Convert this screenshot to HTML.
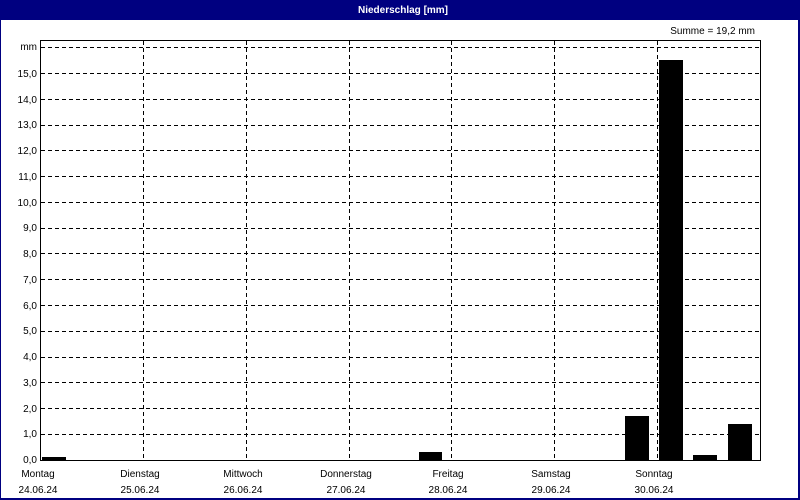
<!DOCTYPE html>
<html><head><style>
body{margin:0;background:#fff}
svg{display:block}
text{font-family:"Liberation Sans",sans-serif;font-size:10px;fill:#000}
</style></head><body>
<svg width="800" height="500" xmlns="http://www.w3.org/2000/svg">
<rect x="0" y="0" width="800" height="500" fill="#000080"/>
<rect x="1" y="20" width="797" height="478" fill="#fff"/>
<text x="403" y="13" text-anchor="middle" style="fill:#fff;font-weight:bold">Niederschlag [mm]</text>
<text x="755" y="34" text-anchor="end">Summe = 19,2 mm</text>
<g stroke="#000" stroke-width="1" stroke-dasharray="4,3" shape-rendering="crispEdges">
<line x1="41" y1="47.5" x2="760" y2="47.5"/>
<line x1="41" y1="73.5" x2="760" y2="73.5"/>
<line x1="41" y1="99.5" x2="760" y2="99.5"/>
<line x1="41" y1="125.5" x2="760" y2="125.5"/>
<line x1="41" y1="150.5" x2="760" y2="150.5"/>
<line x1="41" y1="176.5" x2="760" y2="176.5"/>
<line x1="41" y1="202.5" x2="760" y2="202.5"/>
<line x1="41" y1="228.5" x2="760" y2="228.5"/>
<line x1="41" y1="253.5" x2="760" y2="253.5"/>
<line x1="41" y1="279.5" x2="760" y2="279.5"/>
<line x1="41" y1="305.5" x2="760" y2="305.5"/>
<line x1="41" y1="331.5" x2="760" y2="331.5"/>
<line x1="41" y1="357.5" x2="760" y2="357.5"/>
<line x1="41" y1="382.5" x2="760" y2="382.5"/>
<line x1="41" y1="408.5" x2="760" y2="408.5"/>
<line x1="41" y1="434.5" x2="760" y2="434.5"/>
<line x1="143.5" y1="41" x2="143.5" y2="460"/>
<line x1="246.5" y1="41" x2="246.5" y2="460"/>
<line x1="349.5" y1="41" x2="349.5" y2="460"/>
<line x1="451.5" y1="41" x2="451.5" y2="460"/>
<line x1="554.5" y1="41" x2="554.5" y2="460"/>
<line x1="657.5" y1="41" x2="657.5" y2="460"/>
</g>
<g fill="#000" shape-rendering="crispEdges">
<rect x="42" y="457" width="24" height="3"/>
<rect x="419" y="452" width="23" height="8"/>
<rect x="625" y="416" width="24" height="44"/>
<rect x="659" y="60" width="24" height="400"/>
<rect x="693" y="455" width="24" height="5"/>
<rect x="728" y="424" width="24" height="36"/>
</g>
<rect x="40.5" y="40.5" width="720" height="420" fill="none" stroke="#000" stroke-width="1" shape-rendering="crispEdges"/>
<g text-anchor="end">
<text x="37" y="50">mm</text>
<text x="37" y="77">15,0</text>
<text x="37" y="103">14,0</text>
<text x="37" y="128">13,0</text>
<text x="37" y="154">12,0</text>
<text x="37" y="180">11,0</text>
<text x="37" y="206">10,0</text>
<text x="37" y="231">9,0</text>
<text x="37" y="257">8,0</text>
<text x="37" y="283">7,0</text>
<text x="37" y="309">6,0</text>
<text x="37" y="334">5,0</text>
<text x="37" y="360">4,0</text>
<text x="37" y="386">3,0</text>
<text x="37" y="412">2,0</text>
<text x="37" y="437">1,0</text>
<text x="37" y="463">0,0</text>
</g>
<g text-anchor="middle">
<text x="38" y="477">Montag</text><text x="38" y="493">24.06.24</text>
<text x="140" y="477">Dienstag</text><text x="140" y="493">25.06.24</text>
<text x="243" y="477">Mittwoch</text><text x="243" y="493">26.06.24</text>
<text x="346" y="477">Donnerstag</text><text x="346" y="493">27.06.24</text>
<text x="448" y="477">Freitag</text><text x="448" y="493">28.06.24</text>
<text x="551" y="477">Samstag</text><text x="551" y="493">29.06.24</text>
<text x="654" y="477">Sonntag</text><text x="654" y="493">30.06.24</text>
</g>
</svg>
</body></html>
